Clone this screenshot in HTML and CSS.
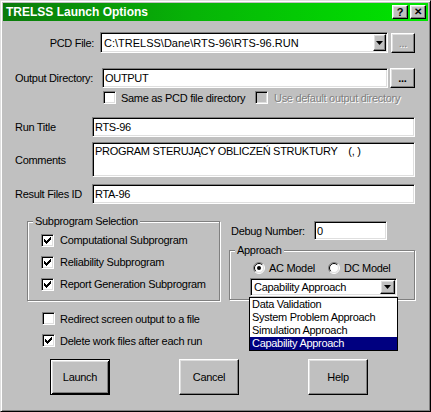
FILE: index.html
```html
<!DOCTYPE html>
<html>
<head>
<meta charset="utf-8">
<title>TRELSS Launch Options</title>
<link rel="stylesheet" href="styles.css">
</head>
<body>
<div class="window">
  <div class="titlebar">
    <span class="title">TRELSS Launch Options</span>
    <div class="tbtns">
      <span class="tbtn raised">?</span>
      <span class="tbtn raised tx">&#x2715;</span>
    </div>
  </div>
  <div class="client">
    <div class="row r-pcd">
      <span class="lbl lbl-pcd">PCD File:</span>
      <div class="combo combo-pcd sunken">
        <span class="ctext">C:\TRELSS\Dane\RTS-96\RTS-96.RUN</span>
        <span class="arrow raised"><svg width="7" height="4" viewBox="0 0 7 4"><path d="M0 0h7L3.5 4z" fill="#000"/></svg></span>
      </div>
      <span class="btn raised browse dis">...</span>
    </div>
    <div class="row r-out">
      <span class="lbl lbl-out">Output Directory:</span>
      <div class="field f-out sunken">OUTPUT</div>
      <span class="btn raised browse2">...</span>
    </div>
    <div class="row r-chk">
      <span class="chk chk-same"><span class="box sunken"></span><span>Same as PCD file directory</span></span>
      <span class="chk chk-def dis"><span class="box sunken off"></span><span>Use default output directory</span></span>
    </div>
    <div class="row r-run">
      <span class="lbl lbl-run">Run Title</span>
      <div class="field f-run sunken">RTS-96</div>
    </div>
    <div class="row r-com">
      <span class="lbl lbl-run">Comments</span>
      <div class="field f-com sunken">PROGRAM STERUJĄCY OBLICZEŃ STRUKTURY    (, )</div>
    </div>
    <div class="row r-res">
      <span class="lbl lbl-run">Result Files ID</span>
      <div class="field f-run sunken">RTA-96</div>
    </div>

    <div class="mid">
      <div class="group g-sub">
        <span class="legend">Subprogram Selection</span>
        <span class="chk crow"><span class="box sunken"><svg width="11" height="11" viewBox="0 0 11 11"><path d="M2 4h1v3H2zM3 5h1v3H3zM4 6h1v3H4zM5 5h1v3H5zM6 4h1v3H6zM7 3h1v3H7zM8 2h1v3H8z" fill="#000"/></svg></span><span>Computational Subprogram</span></span>
        <span class="chk crow"><span class="box sunken"><svg width="11" height="11" viewBox="0 0 11 11"><path d="M2 4h1v3H2zM3 5h1v3H3zM4 6h1v3H4zM5 5h1v3H5zM6 4h1v3H6zM7 3h1v3H7zM8 2h1v3H8z" fill="#000"/></svg></span><span>Reliability Subprogram</span></span>
        <span class="chk crow"><span class="box sunken"><svg width="11" height="11" viewBox="0 0 11 11"><path d="M2 4h1v3H2zM3 5h1v3H3zM4 6h1v3H4zM5 5h1v3H5zM6 4h1v3H6zM7 3h1v3H7zM8 2h1v3H8z" fill="#000"/></svg></span><span>Report Generation Subprogram</span></span>
      </div>
      <div class="rcol">
        <div class="row r-dbg">
          <span class="lbl lbl-dbg">Debug Number:</span>
          <div class="field f-dbg sunken">0</div>
        </div>
        <div class="group g-app">
          <span class="legend">Approach</span>
          <div class="radios">
            <span class="radio r-ac">
              <svg width="12" height="12" viewBox="0 0 12 12"><circle cx="6" cy="6" r="5" fill="#fff"/><path d="M2.1 9.9A5.5 5.5 0 0 1 9.9 2.1" fill="none" stroke="#808080"/><path d="M9.9 2.1A5.5 5.5 0 0 1 2.1 9.9" fill="none" stroke="#fff"/><path d="M2.8 9.2A4.5 4.5 0 0 1 9.2 2.8" fill="none" stroke="#000"/><path d="M9.2 2.8A4.5 4.5 0 0 1 2.8 9.2" fill="none" stroke="#dfdfdf"/><circle cx="6" cy="6" r="2" fill="#000"/></svg>
              <span>AC Model</span>
            </span>
            <span class="radio">
              <svg width="12" height="12" viewBox="0 0 12 12"><circle cx="6" cy="6" r="5" fill="#fff"/><path d="M2.1 9.9A5.5 5.5 0 0 1 9.9 2.1" fill="none" stroke="#808080"/><path d="M9.9 2.1A5.5 5.5 0 0 1 2.1 9.9" fill="none" stroke="#fff"/><path d="M2.8 9.2A4.5 4.5 0 0 1 9.2 2.8" fill="none" stroke="#000"/><path d="M9.2 2.8A4.5 4.5 0 0 1 2.8 9.2" fill="none" stroke="#dfdfdf"/></svg>
              <span>DC Model</span>
            </span>
          </div>
          <div class="combo combo-app sunken">
            <span class="ctext">Capability Approach</span>
            <span class="arrow arrow-app raised"><svg width="7" height="4" viewBox="0 0 7 4"><path d="M0 0h7L3.5 4z" fill="#000"/></svg></span>
          </div>
        </div>
      </div>
    </div>

    <div class="opts">
      <span class="chk orow"><span class="box sunken"></span><span>Redirect screen output to a file</span></span>
      <span class="chk orow"><span class="box sunken"><svg width="11" height="11" viewBox="0 0 11 11"><path d="M2 4h1v3H2zM3 5h1v3H3zM4 6h1v3H4zM5 5h1v3H5zM6 4h1v3H6zM7 3h1v3H7zM8 2h1v3H8z" fill="#000"/></svg></span><span>Delete work files after each run</span></span>
    </div>

    <div class="buttons">
      <span class="pbtn default">Launch</span>
      <span class="pbtn raised">Cancel</span>
      <span class="pbtn raised">Help</span>
    </div>

    <ul class="droplist">
      <li>Data Validation</li>
      <li>System Problem Approach</li>
      <li>Simulation Approach</li>
      <li class="sel">Capability Approach</li>
    </ul>
  </div>
</div>
</body>
</html>
```
FILE: styles.css
```css
html, body {
  margin: 0;
  padding: 0;
  background: #c0c0c0;
}
body {
  font-family: "Liberation Sans", Arial, sans-serif;
  font-size: 11px;
  color: #000;
}
.window {
  width: 431px;
  height: 412px;
  box-sizing: border-box;
  border: 1px solid;
  border-color: #dfdfdf #000 #000 #dfdfdf;
  box-shadow: inset 1px 1px #fff, inset -1px -1px #808080;
  padding: 2px;
  background: #c0c0c0;
}
.raised {
  background: #c0c0c0;
  border: 1px solid;
  border-color: #fff #000 #000 #fff;
  box-shadow: inset -1px -1px #808080, inset 1px 1px #dfdfdf;
  box-sizing: border-box;
}
.sunken {
  background: #fff;
  border: 1px solid;
  border-color: #808080 #fff #fff #808080;
  box-shadow: inset 1px 1px #000, inset -1px -1px #dfdfdf;
  box-sizing: border-box;
}
.titlebar {
  height: 18px;
  display: flex;
  align-items: center;
  padding-left: 3px;
  background: linear-gradient(to right, #0b7a0b, #07b407 45%, #00e600);
  color: #fff;
  font-weight: bold;
  font-size: 12px;
}
.tbtns {
  margin-left: auto;
  display: flex;
  gap: 2px;
  padding-right: 2px;
}
.tbtn {
  width: 16px;
  height: 14px;
  display: flex;
  align-items: center;
  justify-content: center;
  color: #000;
  font-size: 11px;
  font-weight: bold;
  line-height: 12px;
}
.tbtn.tx { font-size: 10px; }
.client {
  position: relative;
  display: flex;
  flex-direction: column;
  width: 425px;
  letter-spacing: -0.3px;
}
.row {
  display: flex;
  align-items: center;
}
.lbl { white-space: nowrap; }
.r-pcd { margin-top: 11px; height: 21px; }
.lbl-pcd { width: 91px; text-align: right; }
.combo {
  display: flex;
  align-items: stretch;
  padding: 1px;
}
.combo .ctext {
  flex: 1;
  display: flex;
  align-items: center;
  padding-left: 2px;
  white-space: nowrap;
  overflow: hidden;
}
.combo-pcd { margin-left: 6px; width: 288px; height: 21px; }
.combo-pcd .ctext { letter-spacing: 0; }
.arrow {
  width: 13px;
  display: flex;
  align-items: center;
  justify-content: center;
}
.arrow svg { display: block; }
.btn {
  display: flex;
  align-items: center;
  justify-content: center;
  height: 20px;
}
.browse { margin-left: 3px; width: 24px; }
.dis { color: #808080; text-shadow: 1px 1px 0 #fff; }
.browse2 { margin-left: 2px; width: 25px; font-weight: bold; }

.r-out { margin-top: 15px; height: 20px; }
.lbl-out { margin-left: 12px; width: 87px; }
.field {
  display: flex;
  align-items: center;
  padding-left: 2px;
  white-space: pre;
  overflow: hidden;
}
.f-out { width: 286px; height: 20px; }

.r-chk { margin-top: 3px; height: 13px; }
.chk {
  display: flex;
  align-items: center;
  gap: 5px;
  white-space: nowrap;
}
.box {
  width: 13px;
  height: 13px;
  flex: none;
}
.box svg { display: block; }
.box.off { background: #c0c0c0; }
.chk-same { margin-left: 100px; width: 152px; }
.chk-def { gap: 6px; }

.r-run { margin-top: 13px; height: 20px; }
.lbl-run { margin-left: 12px; width: 77px; }
.f-run { width: 323px; height: 20px; }
.r-com { margin-top: 5px; height: 35px; }
.f-com { width: 323px; height: 35px; align-items: flex-start; padding-top: 2px; line-height: 13px; }
.r-res { margin-top: 7px; height: 20px; }

.mid {
  margin-top: 17px;
  display: flex;
  align-items: flex-start;
}
.group {
  position: relative;
  border: 1px solid #808080;
  box-shadow: 1px 1px 0 #fff, inset 1px 1px 0 #fff;
  box-sizing: border-box;
}
.legend {
  position: absolute;
  top: -7px;
  left: 5px;
  padding: 0 2px;
  line-height: 13px;
  background: #c0c0c0;
  white-space: nowrap;
}
.g-sub {
  margin-left: 24px;
  width: 193px;
  height: 80px;
  padding: 7px 0 0 13px;
  display: flex;
  flex-direction: column;
}
.crow { height: 22px; gap: 6px; }

.rcol {
  margin-left: 9px;
  display: flex;
  flex-direction: column;
}
.r-dbg { height: 19px; }
.lbl-dbg { margin-left: 2px; width: 83px; }
.f-dbg { width: 73px; height: 19px; }
.g-app {
  margin-top: 10px;
  width: 186px;
  height: 50px;
  padding: 10px 0 0 0;
  display: flex;
  flex-direction: column;
}
.radios {
  display: flex;
  align-items: center;
  height: 13px;
  padding-left: 23px;
}
.radio {
  display: flex;
  align-items: center;
  gap: 4px;
  white-space: nowrap;
}
.radio svg { display: block; flex: none; }
.r-ac { width: 75px; }
.combo-app {
  margin-top: 4px;
  margin-left: 20px;
  width: 147px;
  height: 18px;
}
.arrow-app { width: 15px; }

.opts {
  margin-top: 11px;
  display: flex;
  flex-direction: column;
  gap: 9px;
}
.orow { margin-left: 39px; height: 13px; }

.buttons {
  margin-top: 12px;
  display: flex;
  gap: 69px;
  padding-left: 47px;
}
.pbtn {
  width: 60px;
  height: 36px;
  display: flex;
  align-items: center;
  justify-content: center;
  box-sizing: border-box;
}
.pbtn.default {
  background: #c0c0c0;
  border: 1px solid #000;
  box-shadow: inset 1px 1px #fff, inset -1px -1px #000, inset 2px 2px #dfdfdf, inset -2px -2px #808080;
}

.droplist {
  position: absolute;
  left: 246px;
  top: 276px;
  width: 149px;
  margin: 0;
  padding: 0;
  list-style: none;
  background: #fff;
  border: 1px solid #000;
  box-sizing: border-box;
}
.droplist li {
  height: 13px;
  line-height: 13px;
  padding-left: 2px;
  white-space: nowrap;
}
.droplist li.sel {
  background: #000080;
  color: #fff;
}
```
